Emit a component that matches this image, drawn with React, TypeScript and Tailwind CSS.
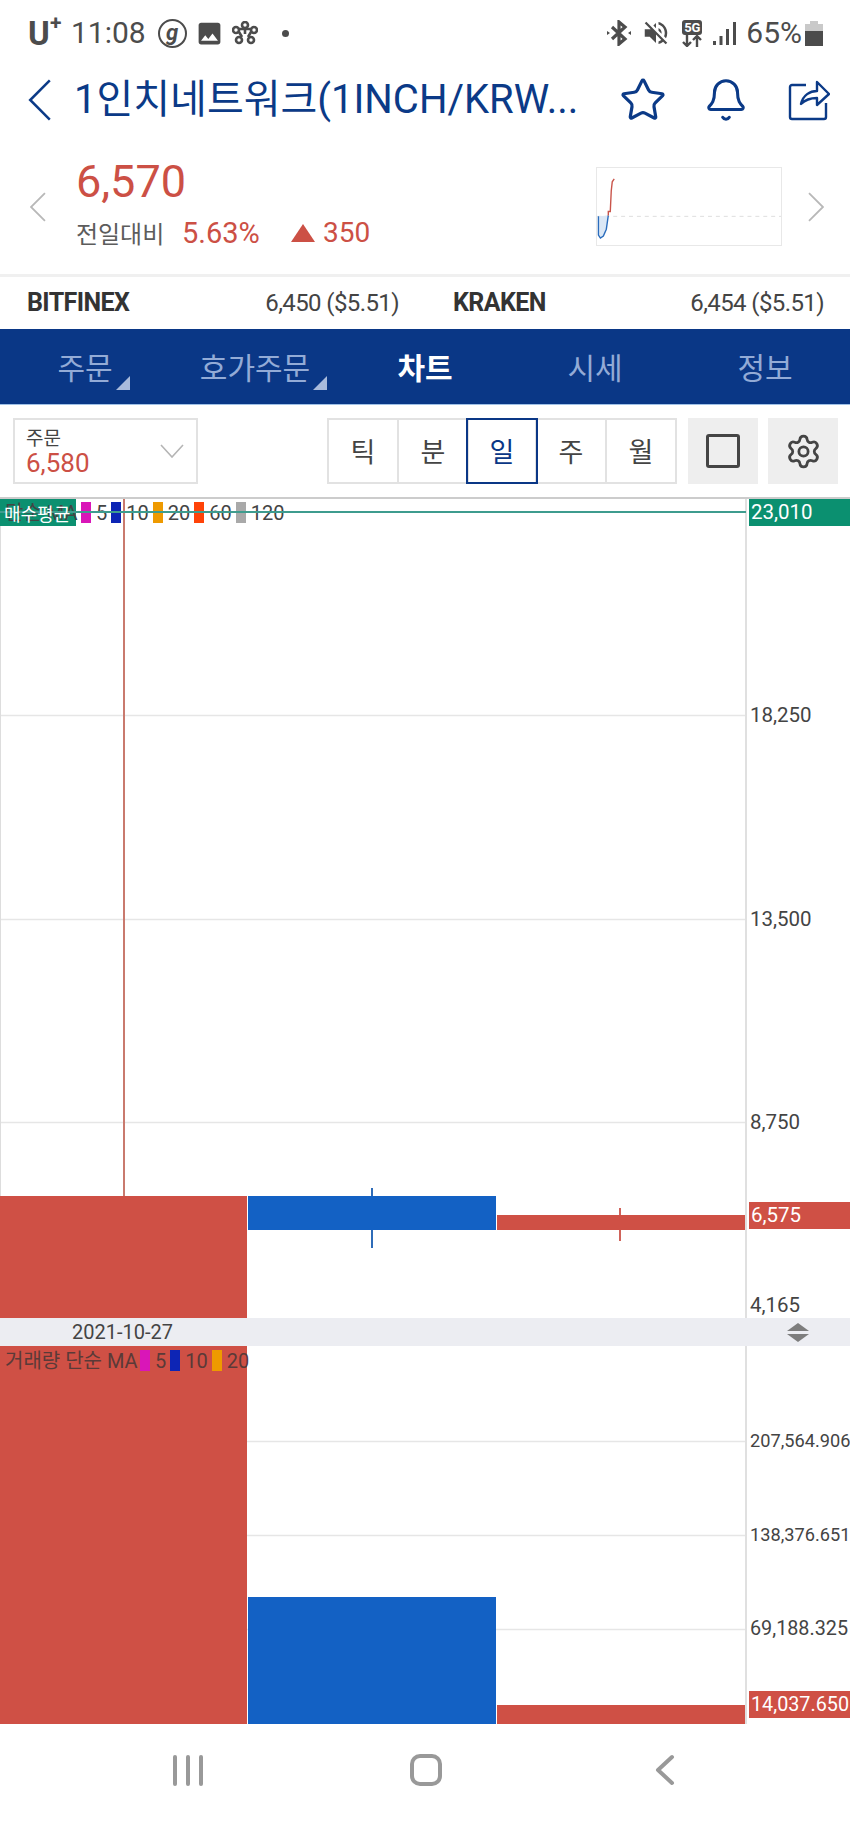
import { Bell, Settings, Star } from "lucide-react";
import { MdPhoto, MdVolumeOff } from "react-icons/md";

const tabs = [
  { label: "주문", menu: true },
  { label: "호가주문", menu: true },
  { label: "차트", active: true },
  { label: "시세" },
  { label: "정보" },
];

const periods = ["틱", "분", "일", "주", "월"];

const mainLegend = [
  { color: "bg-[#d916b8]", label: "5" },
  { color: "bg-[#0d25b5]", label: "10" },
  { color: "bg-[#ee9a00]", label: "20" },
  { color: "bg-[#ff4308]", label: "60" },
  { color: "bg-[#a9a9a9]", label: "120" },
];

const volumeLegend = mainLegend.slice(0, 3);

function Chevron({ dir, className }: { dir: "left" | "right"; className: string }) {
  return (
    <svg viewBox="0 0 16 30" fill="none" stroke="currentColor" className={className}>
      <polyline points={dir === "left" ? "15,1 1,15 15,29" : "1,1 15,15 1,29"} strokeWidth="1.8" />
    </svg>
  );
}

function StatusBar() {
  return (
    <div className="flex h-[55px] items-center justify-between pl-[28px] pr-[27px] pt-[11px] text-[#4c4c4c]">
      <div className="flex items-center">
        <span className="relative w-[33px] text-[33px] font-bold leading-none">
          U<span className="absolute left-[22px] top-[-4px] text-[21px]">+</span>
        </span>
        <span className="ml-[10px] text-[30px] leading-none">11:08</span>
        <span className="ml-[12px] flex h-[29px] w-[29px] items-center justify-center rounded-full border-2 border-[#4c4c4c] text-[22px] font-bold italic leading-none">
          g
        </span>
        <MdPhoto className="ml-[8px] h-[29px] w-[29px]" />
        <svg viewBox="0 0 26 24" fill="none" stroke="currentColor" strokeWidth="2.6" className="ml-[8px] h-[24px] w-[26px]">
          <circle cx="13" cy="4" r="3" />
          <circle cx="4" cy="9" r="3" />
          <circle cx="22" cy="9" r="3" />
          <circle cx="7" cy="19" r="3" />
          <circle cx="19" cy="19" r="3" />
          <path d="M7 11l3 5M19 11l-3 5M7 8h12M13 7v6" />
        </svg>
        <span className="ml-[24px] h-[7px] w-[7px] rounded-full bg-[#4c4c4c]" />
      </div>
      <div className="flex items-center">
        <svg viewBox="0 0 24 26" fill="none" stroke="currentColor" className="h-[26px] w-[24px]">
          <path d="M5 7L18 19L12 24V2L18 7L5 19" strokeWidth="3.2" />
          <path d="M0 11l3 2-3 2zM24 11l-3 2 3 2z" fill="currentColor" stroke="none" />
        </svg>
        <MdVolumeOff className="ml-[10px] h-[30px] w-[30px]" />
        <div className="ml-[9px] flex w-[24px] flex-col items-center">
          <span className="rounded-[3px] bg-[#4c4c4c] px-[2px] text-[13px] font-bold leading-[15px] text-white">5G</span>
          <svg viewBox="0 0 24 12" fill="none" stroke="currentColor" strokeWidth="2.4" className="h-[12px] w-[24px]">
            <path d="M7 0v11M3 7l4 4 4-4M17 12V1M13 5l4-4 4 4" />
          </svg>
        </div>
        <svg viewBox="0 0 23 23" fill="currentColor" className="ml-[9px] h-[23px] w-[23px]">
          <rect x="0" y="19" width="3" height="4" />
          <rect x="6.5" y="14" width="3" height="9" />
          <rect x="13" y="7" width="3" height="16" />
          <rect x="20" y="0" width="3" height="23" />
        </svg>
        <span className="ml-[10px] text-[30px] leading-none">65%</span>
        <svg viewBox="0 0 18 25" className="ml-[3px] h-[25px] w-[18px]">
          <path d="M5 0h8v3h5v22H0V3h5z" fill="#c9c9c9" />
          <path d="M0 10h18v15H0z" fill="#4c4c4c" />
        </svg>
      </div>
    </div>
  );
}

function Header() {
  return (
    <div className="flex h-[85px] items-center pl-[27px] pt-[5px] text-[#0b3a87]">
      <Chevron dir="left" className="h-[42px] w-[26px]" />
      <h1 className="ml-[21px] w-[512px] whitespace-nowrap text-[40px] leading-none">1인치네트워크(1INCH/KRW...</h1>
      <Star className="ml-[33px] h-[48px] w-[48px]" strokeWidth={1.6} />
      <Bell className="ml-[36px] h-[46px] w-[46px]" strokeWidth={1.6} />
      <svg viewBox="0 0 42 42" fill="none" stroke="currentColor" strokeWidth="2.4" strokeLinejoin="round" className="ml-[39px] h-[42px] w-[42px]">
        <path d="M18 6H4a2 2 0 0 0-2 2v30a2 2 0 0 0 2 2h32a2 2 0 0 0 2-2V24" />
        <path d="M13 25c2-9 9-13 16-13V3l12 12-12 11v-7c-7 0-12 2-16 6z" />
      </svg>
    </div>
  );
}

function PriceRow() {
  return (
    <div className="flex h-[137px] items-center border-b-[3px] border-[#f0f0f0] pb-[2px] pl-[30px] pr-[26px]">
      <Chevron dir="left" className="mt-[2px] h-[30px] w-[16px] text-[#b8b8b8]" />
      <div className="mb-[8px] ml-[30px] flex w-[521px] flex-col">
        <span className="text-[45px] leading-[54px] text-[#cc5045]">6,570</span>
        <div className="mt-[8px] flex items-center text-[#cc5045]">
          <span className="w-[106px] font-['Noto_Sans_CJK_KR',sans-serif] text-[24px] leading-[32px] text-[#5c5c5c]">전일대비</span>
          <span className="w-[109px] text-[29px] leading-[32px]">5.63%</span>
          <svg viewBox="0 0 24 18" className="h-[18px] w-[24px]" fill="currentColor">
            <polygon points="12,0 24,18 0,18" />
          </svg>
          <span className="ml-[8px] text-[28px] leading-[32px]">350</span>
        </div>
      </div>
      <div className="h-[79px] w-[187px] border border-[#e8e8e8]">
        <svg viewBox="0 0 186 78" fill="none" className="h-full w-full">
          <path d="M0 49h186" stroke="#dddddd" strokeDasharray="4 4" />
          <path d="M1 49V68L3 71 6 69 9 62 11 48Z" fill="#dbe8f6" />
          <path d="M1 49V68L3 71 6 69 9 62 11 48" stroke="#2a6cbc" strokeWidth="1.4" />
          <path d="M11 48V44H13L14 23 15 14 17 11" stroke="#c9544a" strokeWidth="1.4" />
        </svg>
      </div>
      <Chevron dir="right" className="ml-[26px] mt-[2px] h-[30px] w-[16px] text-[#b8b8b8]" />
    </div>
  );
}

function ExchangeRow() {
  return (
    <div className="flex h-[52px] items-center text-[24px] tracking-[-0.6px] text-[#444444]">
      <div className="flex w-[425px] items-center justify-between pl-[27px] pr-[26px]">
        <span className="text-[25px] font-bold text-[#333333]">BITFINEX</span>
        <span>6,450 ($5.51)</span>
      </div>
      <div className="flex w-[425px] items-center justify-between pl-[28px] pr-[26px]">
        <span className="text-[25px] font-bold text-[#333333]">KRAKEN</span>
        <span>6,454 ($5.51)</span>
      </div>
    </div>
  );
}

function TabBar() {
  return (
    <div className="grid h-[76px] grid-cols-5 border-b border-[#9fc0e6] bg-[#0a3786] font-['Noto_Sans_CJK_KR',sans-serif] text-[30px] leading-none">
      {tabs.map((tab) => (
        <div key={tab.label} className="flex items-center justify-center pb-[2px]">
          <span className={tab.active ? "relative font-bold text-white" : "relative text-[#93abd6]"}>
            {tab.label}
            {tab.menu && (
              <svg viewBox="0 0 14 14" className="absolute bottom-[-9px] right-[-17px] h-[14px] w-[14px]" fill="#a9bbdc">
                <polygon points="14,0 14,14 0,14" />
              </svg>
            )}
          </span>
        </div>
      ))}
    </div>
  );
}

function Toolbar() {
  return (
    <div className="flex h-[92px] items-center pl-[13px] pr-[12px] font-['Noto_Sans_CJK_KR',sans-serif]">
      <div className="flex h-[66px] w-[185px] items-center justify-between border-2 border-[#e2e2e2] pl-[11px] pr-[12px]">
        <div className="flex flex-col">
          <span className="text-[19px] leading-[23px] text-[#444444]">주문</span>
          <span className="mt-[2px] font-['Roboto',sans-serif] text-[26px] leading-[27px] text-[#cc5045]">6,580</span>
        </div>
        <svg viewBox="0 0 24 14" fill="none" stroke="#b5b5b5" strokeWidth="1.6" className="h-[14px] w-[24px]">
          <polyline points="1,1 12,13 23,1" />
        </svg>
      </div>
      <div className="ml-[129px] flex h-[66px] w-[350px]">
        {periods.map((period) => (
          <div
            key={period}
            className={
              period === "일"
                ? "z-10 -ml-[3px] -mr-px flex w-[72px] items-center justify-center border-2 border-[#0a3786] text-[27px] text-[#0a3786]"
                : "-ml-[2px] flex flex-1 items-center justify-center border-2 border-[#e2e2e2] text-[27px] text-[#444444] first:ml-0"
            }
          >
            {period}
          </div>
        ))}
      </div>
      <div className="ml-[11px] flex h-[66px] w-[70px] items-center justify-center bg-[#eeeeee]">
        <div className="h-[34px] w-[34px] rounded-[3px] border-[3px] border-[#444444]" />
      </div>
      <div className="ml-[10px] flex h-[66px] w-[70px] items-center justify-center bg-[#eeeeee]">
        <Settings className="h-[37px] w-[37px] text-[#444444]" strokeWidth={1.8} />
      </div>
    </div>
  );
}

function Legend({ items, className }: { items: typeof mainLegend; className: string }) {
  return (
    <div className={className}>
      {items.map((item) => (
        <span key={item.label} className="flex items-center">
          <span className={`h-[21px] w-[10px] ${item.color}`} />
          <span className="ml-[5px] mr-[4px]">{item.label}</span>
        </span>
      ))}
    </div>
  );
}

function AxisLabel({ y, text, size = "text-[20.5px]" }: { y: number; text: string; size?: string }) {
  return (
    <span className={`absolute left-[750px] -translate-y-1/2 leading-none text-[#444444] ${size}`} style={{ top: y }}>
      {text}
    </span>
  );
}

function MainPane() {
  return (
    <div className="relative h-[819px] overflow-hidden">
      <svg viewBox="0 0 850 819" className="absolute inset-0 h-full w-full">
        <path d="M0 216.5H745M0 420.5H745M0 623.5H745" stroke="#e6e6e6" strokeWidth="1.5" />
        <path d="M0.5 0V697" stroke="#dddddd" />
        <path d="M746 0V819" stroke="#e0e0e0" strokeWidth="2" />
        <path d="M124 0V697" stroke="#c97a6e" strokeWidth="2" />
        <path d="M0 697H247V819H0Z" fill="#cf5045" />
        <path d="M372 689V749" stroke="#2f6cb8" strokeWidth="2" />
        <path d="M248 697H496V731H248Z" fill="#1361c4" />
        <path d="M620 709V742" stroke="#d0635a" strokeWidth="2" />
        <path d="M497 716H745V731H497Z" fill="#cf5045" />
      </svg>
      <div className="absolute left-0 top-0 h-[27px] w-[76px] bg-[#0b9070]" />
      <div className="absolute left-[5px] top-0 flex h-[27px] items-center text-[20px] leading-none text-[#444444]">단순 MA</div>
      <Legend items={mainLegend} className="absolute left-[81px] top-0 flex h-[27px] items-center text-[20px] leading-none text-[#444444]" />
      <div className="absolute left-0 right-[104px] top-[12px] h-[2px] bg-[#3e9c8e]" />
      <div className="absolute left-[4px] top-0 flex h-[27px] items-center font-['Noto_Sans_CJK_KR',sans-serif] text-[18px] leading-none text-white">매수평균</div>
      <div className="absolute left-[749px] right-0 top-0 flex h-[27px] items-center bg-[#0b9070] pl-[2px] text-[20.5px] leading-none text-white">23,010</div>
      <AxisLabel y={216} text="18,250" />
      <AxisLabel y={420} text="13,500" />
      <AxisLabel y={623} text="8,750" />
      <AxisLabel y={806} text="4,165" />
      <div className="absolute left-[749px] right-0 top-[703px] flex h-[27px] items-center bg-[#cf5045] pl-[2px] text-[20.5px] leading-none text-white">6,575</div>
    </div>
  );
}

function DateBar() {
  return (
    <div className="flex h-[28px] items-center justify-between bg-[#ecedf2] pl-[72px] pr-[41px] text-[20px] leading-none text-[#444444]">
      <span>2021-10-27</span>
      <svg viewBox="0 0 22 19" className="h-[19px] w-[22px]" fill="#7d7d7d">
        <polygon points="11,0 22,8 0,8" />
        <polygon points="0,11 22,11 11,19" />
      </svg>
    </div>
  );
}

function VolumePane() {
  return (
    <div className="relative h-[378px] overflow-hidden">
      <svg viewBox="0 0 850 378" className="absolute inset-0 h-full w-full">
        <path d="M0 95.5H745M0 189.5H745M0 283.5H745" stroke="#e6e6e6" strokeWidth="1.5" />
        <path d="M746 0V378" stroke="#e0e0e0" strokeWidth="2" />
        <path d="M0 0H247V378H0Z" fill="#cf5045" />
        <path d="M248 251H496V378H248Z" fill="#1361c4" />
        <path d="M497 359H745V378H497Z" fill="#cf5045" />
      </svg>
      <div className="absolute left-[5px] top-[4px] flex h-[21px] items-center text-[20px] leading-none text-[#5a3a38]">
        <span className="mr-[7px] w-[128px] whitespace-nowrap text-[20px]">거래량 단순 MA</span>
        <Legend items={volumeLegend} className="flex items-center" />
      </div>
      <AxisLabel y={95} text="207,564.906" size="text-[18.2px]" />
      <AxisLabel y={189} text="138,376.651" size="text-[18.2px]" />
      <AxisLabel y={283} text="69,188.325" size="text-[19.8px]" />
      <div className="absolute left-[749px] right-0 top-[345px] flex h-[27px] items-center bg-[#cf5045] pl-[2px] text-[19.8px] leading-none text-white">14,037.650</div>
    </div>
  );
}

function NavBar() {
  return (
    <div className="flex h-[99px] items-center pb-[7px] pl-[173px] text-[#999999]">
      <div className="flex w-[30px] justify-between">
        <span className="h-[31px] w-[4px] rounded-full bg-[#999999]" />
        <span className="h-[31px] w-[4px] rounded-full bg-[#999999]" />
        <span className="h-[31px] w-[4px] rounded-full bg-[#999999]" />
      </div>
      <div className="ml-[207px] h-[32px] w-[32px] rounded-[10px] border-[4px] border-[#999999]" />
      <svg viewBox="0 0 20 32" fill="none" stroke="currentColor" strokeWidth="4" strokeLinecap="round" strokeLinejoin="round" className="ml-[213px] h-[32px] w-[20px]">
        <polyline points="17,3 3,16 17,29" />
      </svg>
    </div>
  );
}

export default function App() {
  return (
    <div className="flex h-[1823px] w-[850px] flex-col overflow-hidden bg-white font-['Roboto','Noto_Sans_CJK_KR',sans-serif]">
      <StatusBar />
      <Header />
      <PriceRow />
      <ExchangeRow />
      <TabBar />
      <Toolbar />
      <div className="h-[2px] bg-[#cccccc]" />
      <MainPane />
      <DateBar />
      <VolumePane />
      <NavBar />
    </div>
  );
}
